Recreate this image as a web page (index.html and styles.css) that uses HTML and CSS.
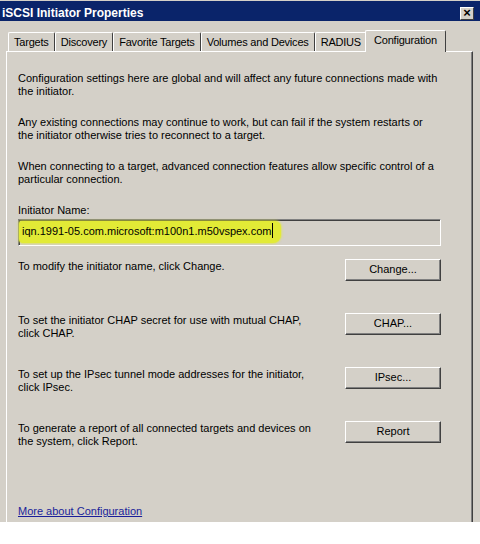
FILE: index.html
```html
<!DOCTYPE html>
<html>
<head>
<meta charset="utf-8">
<title>iSCSI Initiator Properties</title>
<link rel="stylesheet" href="styles.css">
</head>
<body>
<div class="window">
  <div class="titlebar">
    <span class="title">iSCSI Initiator Properties</span>
    <span class="close">&#x00D7;</span>
  </div>
  <div class="tabs">
    <div class="tab">Targets</div>
    <div class="tab">Discovery</div>
    <div class="tab">Favorite Targets</div>
    <div class="tab">Volumes and Devices</div>
    <div class="tab">RADIUS</div>
    <div class="tab active">Configuration</div>
  </div>
  <div class="panel">
    <p class="para">Configuration settings here are global and will affect any future connections made with<br>the initiator.</p>
    <p class="para">Any existing connections may continue to work, but can fail if the system restarts or<br>the initiator otherwise tries to reconnect to a target.</p>
    <p class="para">When connecting to a target, advanced connection features allow specific control of a<br>particular connection.</p>
    <div class="field-label">Initiator Name:</div>
    <div class="input"><span class="hl">iqn.1991-05.com.microsoft:m100n1.m50vspex.com<span class="caret"></span></span></div>
    <div class="row row-first">
      <p class="row-text">To modify the initiator name, click Change.</p>
      <div class="btn">Change...</div>
    </div>
    <div class="row">
      <p class="row-text">To set the initiator CHAP secret for use with mutual CHAP,<br>click CHAP.</p>
      <div class="btn">CHAP...</div>
    </div>
    <div class="row">
      <p class="row-text">To set up the IPsec tunnel mode addresses for the initiator,<br>click IPsec.</p>
      <div class="btn">IPsec...</div>
    </div>
    <div class="row">
      <p class="row-text">To generate a report of all connected targets and devices on<br>the system, click Report.</p>
      <div class="btn">Report</div>
    </div>
    <a class="link" href="#">More about Configuration</a>
  </div>
</div>
</body>
</html>
```

FILE: styles.css
```css
* { box-sizing: border-box; }
html, body { margin: 0; padding: 0; background: #ffffff; }
body {
  font-family: "Liberation Sans", Arial, sans-serif;
  font-size: 11px;
  line-height: 13px;
  color: #000;
}
.window {
  width: 480px;
  height: 522px;
  background: #d4d0c8;
  overflow: hidden;
}
.titlebar {
  height: 21px;
  border-top: 1px solid #d4d0c8;
  background: #0a246a;
  display: flex;
  align-items: center;
  justify-content: space-between;
  padding: 4px 6px 0 2px;
}
.title {
  color: #fff;
  font-weight: bold;
  font-size: 12px;
}
.close {
  width: 14px;
  height: 13px;
  background: #d4d0c8;
  border-top: 1px solid #fff;
  border-left: 1px solid #fff;
  border-right: 1px solid #404040;
  border-bottom: 1px solid #404040;
  font-size: 13px;
  font-weight: bold;
  line-height: 10px;
  text-align: center;
  color: #000;
}
.tabs {
  display: flex;
  align-items: flex-end;
  padding-left: 8px;
  margin-top: 9px;
  height: 22px;
  position: relative;
  z-index: 1;
  margin-bottom: -1px;
}
.tab {
  height: 19px;
  margin-bottom: 1px;
  padding: 0 5px;
  line-height: 19px;
  letter-spacing: -0.2px;
  border-top: 1px solid #fff;
  border-left: 1px solid #fff;
  border-right: 1px solid #404040;
  border-top-left-radius: 2px;
  border-top-right-radius: 2px;
  white-space: nowrap;
  background: #d4d0c8;
}
.tab.active {
  height: 22px;
  margin-bottom: 0;
  margin-left: -2px;
  padding: 0 8px;
  line-height: 18px;
}
.panel {
  margin-left: 6px;
  width: 467px;
  height: 480px;
  border-top: 1px solid #fff;
  border-left: 1px solid #fff;
  border-right: 1px solid #404040;
  box-shadow: inset -1px 0 0 #808080;
  padding: 20px 31px 0 11px;
  display: flex;
  flex-direction: column;
  align-items: stretch;
}
.para { margin: 0 0 18px 0; }
.field-label { margin-bottom: 2px; }
.input {
  height: 27px;
  border-top: 1px solid #808080;
  border-left: 1px solid #808080;
  border-right: 1px solid #fff;
  border-bottom: 1px solid #fff;
  box-shadow: inset 1px 1px 0 #404040, inset -1px -1px 0 #d4d0c8;
  padding: 1px 3px 0 3px;
  background: #d4d0c8;
}
.hl {
  display: inline-block;
  position: relative;
  margin-left: -3px;
  padding: 2px 8px 5px 3px;
  background: #e2ea36;
  border-radius: 3px 6px 8px 4px;
  box-shadow: 0 0 2px 1px rgba(226, 234, 54, 0.6);
}
.caret {
  display: inline-block;
  width: 1px;
  height: 15px;
  background: #000;
  vertical-align: -3px;
  margin-left: 1px;
}
.row {
  display: flex;
  justify-content: space-between;
  align-items: flex-start;
  height: 22px;
  margin-top: 32px;
}
.row-first { margin-top: 13px; }
.row-text { margin: 1px 0 0 0; }
.btn {
  width: 96px;
  height: 22px;
  flex: none;
  border-top: 1px solid #fff;
  border-left: 1px solid #fff;
  border-right: 1px solid #404040;
  border-bottom: 1px solid #404040;
  box-shadow: inset -1px -1px 0 #808080;
  text-align: center;
  line-height: 19px;
  background: #d4d0c8;
}
.link {
  margin-top: 62px;
  align-self: flex-start;
  color: #1a1f9a;
  text-decoration: underline;
}
```
